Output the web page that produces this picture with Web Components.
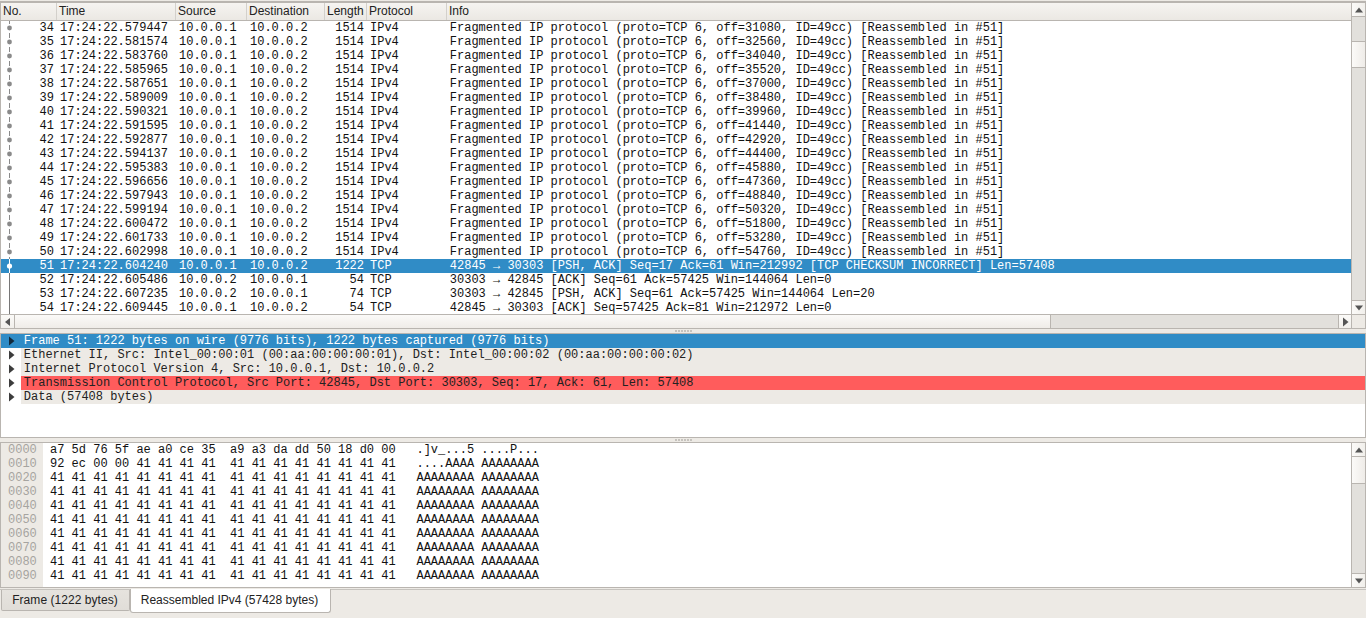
<!DOCTYPE html>
<html>
<head>
<meta charset="utf-8">
<title>Wireshark</title>
<style>
  html, body { margin: 0; height: 100%; background: #edeae5; overflow: hidden; }
  ws-app { height: 618px; }
</style>
</head>
<body>
<ws-app></ws-app>
<script>
/* global HTMLElement */

const BORDER = '#b9b5b0'
const FACE = 'linear-gradient(#f6f4f1, #ebe8e3)'
const TROUGH = '#e2e0dc'

const frag = n => {
  const off = 31080 + (n - 34) * 1480
  const ts = {
    34: '579447', 35: '581574', 36: '583760', 37: '585965', 38: '587651', 39: '589009',
    40: '590321', 41: '591595', 42: '592877', 43: '594137', 44: '595383', 45: '596656',
    46: '597943', 47: '599194', 48: '600472', 49: '601733', 50: '602998'
  }[n]
  return {
    no: n,
    time: `17:24:22.${ts}`,
    src: '10.0.0.1',
    dst: '10.0.0.2',
    len: 1514,
    proto: 'IPv4',
    info: `Fragmented IP protocol (proto=TCP 6, off=${off}, ID=49cc) [Reassembled in #51]`,
    mark: 'frag'
  }
}

const PACKETS = []
for (let n = 34; n <= 50; n++) PACKETS.push(frag(n))
PACKETS.push(
  { no: 51, time: '17:24:22.604240', src: '10.0.0.1', dst: '10.0.0.2', len: 1222, proto: 'TCP', info: '42845 → 30303 [PSH, ACK] Seq=17 Ack=61 Win=212992 [TCP CHECKSUM INCORRECT] Len=57408', mark: 'sel', selected: true },
  { no: 52, time: '17:24:22.605486', src: '10.0.0.2', dst: '10.0.0.1', len: 54, proto: 'TCP', info: '30303 → 42845 [ACK] Seq=61 Ack=57425 Win=144064 Len=0', mark: 'line' },
  { no: 53, time: '17:24:22.607235', src: '10.0.0.2', dst: '10.0.0.1', len: 74, proto: 'TCP', info: '30303 → 42845 [PSH, ACK] Seq=61 Ack=57425 Win=144064 Len=20', mark: 'line' },
  { no: 54, time: '17:24:22.609445', src: '10.0.0.1', dst: '10.0.0.2', len: 54, proto: 'TCP', info: '42845 → 30303 [ACK] Seq=57425 Ack=81 Win=212972 Len=0', mark: 'line' }
)

const COLS = '56px 119px 71px 78px 42px 80px 1fr'

const MARKS = {
  frag: '<line x1="8.5" y1="0" x2="8.5" y2="3" stroke="#8a8a8a"/><line x1="8.5" y1="12" x2="8.5" y2="14" stroke="#8a8a8a"/><circle cx="8.5" cy="7" r="2.4" fill="#8a8a8a"/>',
  sel: '<line x1="8.5" y1="0" x2="8.5" y2="14" stroke="#fff"/><circle cx="8.5" cy="7" r="2.6" fill="#fff"/>',
  line: '<line x1="8.5" y1="0" x2="8.5" y2="14" stroke="#777"/>'
}

class WsArrow extends HTMLElement {
  connectedCallback () {
    const points = {
      up: '1,7.5 9,7.5 5,2.5',
      down: '1,2.5 9,2.5 5,7.5',
      left: '7,1 7,9 2,5',
      right: '3,0.5 3,9.5 8.5,5'
    }[this.getAttribute('dir')]
    const root = this.shadowRoot || this.attachShadow({ mode: 'open' })
    root.innerHTML = `
      <style>
        :host { display: flex; align-items: center; justify-content: center; }
        svg { display: block; }
      </style>
      <svg width="10" height="10" viewBox="0 0 10 10"><polygon points="${points}" fill="${this.getAttribute('color') || '#555'}"/></svg>`
  }
}
window.customElements.define('ws-arrow', WsArrow)

class WsVscroll extends HTMLElement {
  connectedCallback () {
    const root = this.attachShadow({ mode: 'open' })
    root.innerHTML = `
      <style>
        :host { display: grid; width: 14px; box-sizing: border-box; border-left: 1px solid ${BORDER}; background: ${TROUGH};
          grid-template-rows: 14px var(--before, 0) var(--thumb, 26px) 1fr 14px; }
        .btn { background: linear-gradient(90deg, #fbfaf8, #f1efeb); }
        .btn.up { border-bottom: 1px solid ${BORDER}; }
        .btn.down { border-top: 1px solid ${BORDER}; }
        .thumb { background: linear-gradient(90deg, #fbfaf8, #efece8); border-bottom: 1px solid ${BORDER}; border-top: var(--thumb-top, 1px solid ${BORDER}); box-sizing: border-box; }
      </style>
      <ws-arrow class="btn up" dir="up"></ws-arrow>
      <div></div>
      <div class="thumb"></div>
      <div></div>
      <ws-arrow class="btn down" dir="down"></ws-arrow>`
  }
}
window.customElements.define('ws-vscroll', WsVscroll)

class WsHscroll extends HTMLElement {
  connectedCallback () {
    const root = this.attachShadow({ mode: 'open' })
    root.innerHTML = `
      <style>
        :host { display: grid; height: 14px; box-sizing: border-box; border-top: 1px solid ${BORDER}; background: ${TROUGH};
          grid-template-columns: 14px 1036px 1fr 13px 14px; }
        .btn { background: linear-gradient(#fbfaf8, #f1efeb); }
        .btn.l { border-right: 1px solid ${BORDER}; }
        .btn.r { border-left: 1px solid ${BORDER}; }
        .thumb { background: linear-gradient(#fbfaf8, #efece8); border-right: 1px solid ${BORDER}; }
        .corner { background: #edeae5; border-left: 1px solid ${BORDER}; }
      </style>
      <ws-arrow class="btn l" dir="left"></ws-arrow>
      <div class="thumb"></div>
      <div></div>
      <ws-arrow class="btn r" dir="right"></ws-arrow>
      <div class="corner"></div>`
  }
}
window.customElements.define('ws-hscroll', WsHscroll)

class WsPacketRow extends HTMLElement {
  set packet (p) {
    const root = this.shadowRoot || this.attachShadow({ mode: 'open' })
    root.innerHTML = `
      <style>
        :host { display: grid; grid-template-columns: ${COLS}; height: 14px; white-space: pre; font: 12px/14px "Liberation Mono", monospace; color: #111; }
        :host([selected]) { background: #308cc6; color: #fff; }
        .no { position: relative; text-align: right; padding-right: 3px; }
        svg { position: absolute; left: 0; top: 0; }
        div { overflow: hidden; padding-left: 3px; }
        .len { text-align: right; padding: 0 3px 0 0; }
        .info { padding-left: 2.8px; }
      </style>
      <div class="no"><svg width="16" height="14">${MARKS[p.mark]}</svg>${p.no}</div>
      <div>${p.time}</div>
      <div>${p.src}</div>
      <div>${p.dst}</div>
      <div class="len">${p.len}</div>
      <div>${p.proto}</div>
      <div class="info">${p.info}</div>`
    if (p.selected) this.setAttribute('selected', '')
  }
}
window.customElements.define('ws-packet-row', WsPacketRow)

class WsPacketList extends HTMLElement {
  connectedCallback () {
    const root = this.attachShadow({ mode: 'open' })
    const heads = ['No.', 'Time', 'Source', 'Destination', 'Length', 'Protocol', 'Info']
    root.innerHTML = `
      <style>
        :host { display: grid; grid-template-columns: 1fr 14px; grid-template-rows: 18px 293px 14px; box-sizing: border-box; height: 328px; margin-top: 1px; border: 1px solid ${BORDER}; border-width: 2px 1px 1px 1px; background: #fff; }
        header { display: grid; grid-template-columns: ${COLS}; font: 12px/17px "Liberation Sans", sans-serif; color: #222; background: ${FACE}; border-bottom: 1px solid ${BORDER}; }
        header div { padding-left: 2px; border-right: 1px solid #d3d0cb; overflow: hidden; white-space: nowrap; }
        header div:last-child { border-right: 0; }
        .rows { overflow: hidden; }
        ws-vscroll { grid-column: 2; grid-row: 1 / 3; --before: 24px; --thumb: 27px; }
        ws-hscroll { grid-column: 1 / 3; }
      </style>
      <header>${heads.map(h => `<div>${h}</div>`).join('')}</header>
      <ws-vscroll></ws-vscroll>
      <div class="rows"></div>
      <ws-hscroll></ws-hscroll>`
    const rows = root.querySelector('.rows')
    PACKETS.forEach(p => {
      const row = document.createElement('ws-packet-row')
      row.packet = p
      rows.appendChild(row)
    })
  }
}
window.customElements.define('ws-packet-list', WsPacketList)

class WsSash extends HTMLElement {
  connectedCallback () {
    const root = this.attachShadow({ mode: 'open' })
    root.innerHTML = `
      <style>
        :host { display: flex; align-items: flex-start; justify-content: center; gap: 1px; height: 4px; padding-top: 1px; box-sizing: border-box; }
        i { width: 2px; height: 2px; background: #c6c3be; }
      </style>
      ${'<i></i>'.repeat(6)}`
  }
}
window.customElements.define('ws-sash', WsSash)

class WsTreeItem extends HTMLElement {
  connectedCallback () {
    const root = this.attachShadow({ mode: 'open' })
    root.innerHTML = `
      <style>
        :host { display: grid; grid-template-columns: 20px 1fr; height: 14px; font: 12px/14px "Liberation Mono", monospace; color: #222; white-space: pre; }
        .text { background: #edeae5; padding-left: 2.8px; }
        ws-arrow { height: 14px; }
        :host([state=selected]) { background: #308cc6; color: #fff; }
        :host([state=selected]) .text { background: transparent; }
        :host([state=error]) .text { background: #ff5c5c; color: #222; }
      </style>
      <ws-arrow dir="right" color="${this.getAttribute('state') === 'selected' ? '#12293b' : '#3c3c3c'}"></ws-arrow>
      <div class="text"><slot></slot></div>`
  }
}
window.customElements.define('ws-tree-item', WsTreeItem)

class WsDetails extends HTMLElement {
  connectedCallback () {
    const root = this.attachShadow({ mode: 'open' })
    root.innerHTML = `
      <style>
        :host { display: block; box-sizing: border-box; height: 105px; border: 1px solid ${BORDER}; background: #fff; }
      </style>
      <slot></slot>`
  }
}
window.customElements.define('ws-details', WsDetails)

class WsHexView extends HTMLElement {
  connectedCallback () {
    const root = this.attachShadow({ mode: 'open' })
    const full = Array(8).fill('41').join(' ')
    const lines = [
      ['0000', 'a7 5d 76 5f ae a0 ce 35  a9 a3 da dd 50 18 d0 00', '.]v_...5 ....P...'],
      ['0010', `92 ec 00 00 41 41 41 41  ${full}`, '....AAAA AAAAAAAA']
    ]
    for (let i = 2; i < 10; i++) lines.push([`00${i}0`, `${full}  ${full}`, 'AAAAAAAA AAAAAAAA'])
    root.innerHTML = `
      <style>
        :host { display: grid; grid-template-columns: 1fr 14px; box-sizing: border-box; height: 146px; border: 1px solid ${BORDER}; background: #fff; }
        .body { display: grid; grid-template-columns: 42px 1fr; font: 12px/14px "Liberation Mono", monospace; white-space: pre; color: #111; }
        .off { background: #edeae5; color: #a6a4a0; padding-left: 7px; }
        .hex { padding-left: 7px; }
        .ascii { margin-left: -.8px; }
      </style>
      <div class="body">
        <div class="off">${lines.map(l => l[0]).join('\n')}</div>
        <div class="hex">${lines.map(l => `${l[1]}   <span class="ascii">${l[2]}</span>`).join('\n')}</div>
      </div>
      <ws-vscroll style="--before: 0px; --thumb: 27px; --thumb-top: 0"></ws-vscroll>`
  }
}
window.customElements.define('ws-hex-view', WsHexView)

class WsTabs extends HTMLElement {
  connectedCallback () {
    const root = this.attachShadow({ mode: 'open' })
    root.innerHTML = `
      <style>
        :host { display: block; flex: 1; margin-top: 1px; border-top: 1px solid #c6c3be; padding-left: 1px; font: 12px "Liberation Sans", sans-serif; color: #222; }
        .tabs { display: flex; align-items: flex-start; }
        .tab { box-sizing: border-box; border: 1px solid ${BORDER}; border-top: 0; white-space: nowrap; text-align: center; }
        .off { width: 129px; height: 21px; line-height: 20px; padding-right: 1px; background: linear-gradient(#e6e3de, #e0ddd8); border-radius: 0 0 2px 2px; letter-spacing: .05px; }
        .on { width: 201px; height: 24px; line-height: 23px; padding-right: 2px; margin-top: -1px; background: #fff; border-radius: 0 0 3px 3px; }
      </style>
      <div class="tabs">
        <div class="tab off">Frame (1222 bytes)</div>
        <div class="tab on">Reassembled IPv4 (57428 bytes)</div>
      </div>`
  }
}
window.customElements.define('ws-tabs', WsTabs)

class WsApp extends HTMLElement {
  connectedCallback () {
    const root = this.attachShadow({ mode: 'open' })
    root.innerHTML = `
      <style>
        :host { display: flex; flex-direction: column; background: #edeae5; }
      </style>
      <ws-packet-list></ws-packet-list>
      <ws-sash></ws-sash>
      <ws-details>
        <ws-tree-item state="selected">Frame 51: 1222 bytes on wire (9776 bits), 1222 bytes captured (9776 bits)</ws-tree-item>
        <ws-tree-item>Ethernet II, Src: Intel_00:00:01 (00:aa:00:00:00:01), Dst: Intel_00:00:02 (00:aa:00:00:00:02)</ws-tree-item>
        <ws-tree-item>Internet Protocol Version 4, Src: 10.0.0.1, Dst: 10.0.0.2</ws-tree-item>
        <ws-tree-item state="error">Transmission Control Protocol, Src Port: 42845, Dst Port: 30303, Seq: 17, Ack: 61, Len: 57408</ws-tree-item>
        <ws-tree-item>Data (57408 bytes)</ws-tree-item>
      </ws-details>
      <ws-sash></ws-sash>
      <ws-hex-view></ws-hex-view>
      <ws-tabs></ws-tabs>`
  }
}
window.customElements.define('ws-app', WsApp)
</script>
</body>
</html>
